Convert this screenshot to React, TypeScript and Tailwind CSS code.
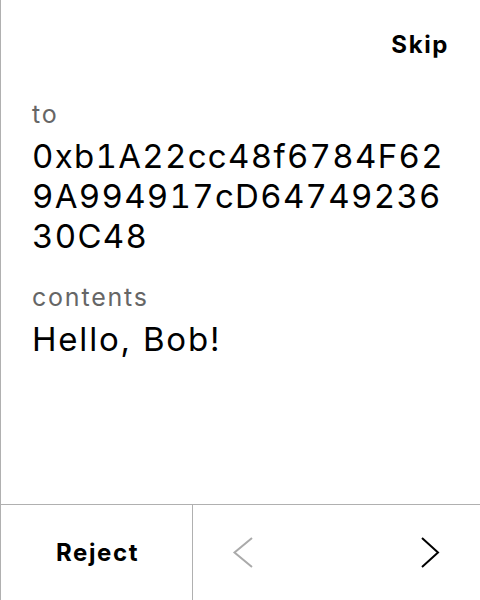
import React from "react";

export default function App() {
  return (
    <div
      className="w-[480px] h-[600px] bg-white border-l border-[#b0b0b0] flex flex-col text-black"
      style={{ fontFamily: "Inter, 'Noto Sans', sans-serif" }}
    >
      <div className="flex justify-end pr-[31px] pt-[29px] h-[98px]">
        <span className="text-[24px] font-bold leading-[32px] tracking-[1.6px]">Skip</span>
      </div>
      <div className="flex-1 pl-[31px] flex flex-col">
        <div className="text-[25px] leading-[32px] text-[#666] tracking-[1.8px]">to</div>
        <div className="text-[33px] leading-[40px] mt-[6px] tracking-[1.3px] tabular-nums">
          <div>0xb1A22cc48f6784F62</div>
          <div>9A994917cD64749236</div>
          <div>30C48</div>
        </div>
        <div className="text-[25px] leading-[32px] text-[#666] mt-[25px] tracking-[1.8px]">contents</div>
        <div className="text-[33px] leading-[40px] mt-[6px] tracking-[1.8px]">Hello, Bob!</div>
      </div>
      <div className="h-[96px] border-t border-[#b0b0b0] flex">
        <div className="w-[192px] border-r border-[#b0b0b0] flex items-center justify-center">
          <span className="text-[24px] font-bold pl-[2px] tracking-[1.6px]">Reject</span>
        </div>
        <div className="flex-1 flex items-center justify-between pl-[34px] pr-[33px]">
          <svg width="32" height="32" viewBox="0 0 32 32" fill="none" stroke="#aaa" strokeWidth="2">
            <path d="M25 1 L7.5 15.5 L25 30" />
          </svg>
          <svg width="32" height="32" viewBox="0 0 32 32" fill="none" stroke="#000" strokeWidth="2">
            <path d="M7 1 L23 15.5 L7 30" />
          </svg>
        </div>
      </div>
    </div>
  );
}
